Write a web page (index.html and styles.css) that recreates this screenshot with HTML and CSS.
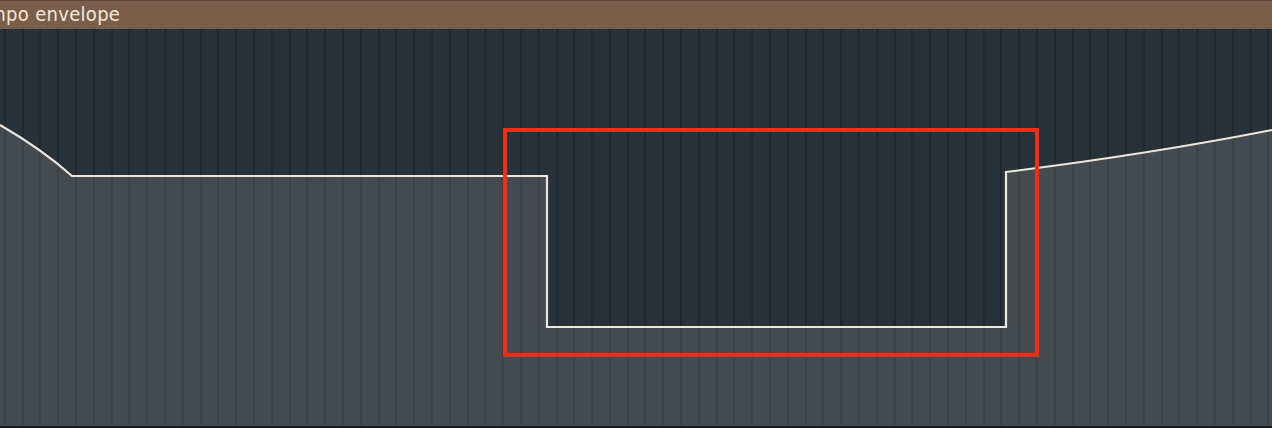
FILE: index.html
```html
<!DOCTYPE html>
<html lang="en">
<head>
    <meta charset="UTF-8">
    <title>Tempo envelope</title>
    <link rel="stylesheet" href="styles.css">
</head>
<body>

    <div class="clip">
        <div class="clip-title"><span class="clip-name">Tempo envelope</span></div>

        <div class="clip-body">
            <!-- one column per beat -->
            <div class="beats">
                <div class="beat"></div><div class="beat"></div><div class="beat"></div><div class="beat"></div>
                <div class="beat"></div><div class="beat"></div><div class="beat"></div><div class="beat"></div>
                <div class="beat"></div><div class="beat"></div><div class="beat"></div><div class="beat"></div>
                <div class="beat"></div><div class="beat"></div><div class="beat"></div><div class="beat"></div>
                <div class="beat"></div><div class="beat"></div><div class="beat"></div><div class="beat"></div>
                <div class="beat"></div><div class="beat"></div><div class="beat"></div><div class="beat"></div>
                <div class="beat"></div><div class="beat"></div><div class="beat"></div><div class="beat"></div>
                <div class="beat"></div><div class="beat"></div><div class="beat"></div><div class="beat"></div>
                <div class="beat"></div><div class="beat"></div><div class="beat"></div><div class="beat"></div>
                <div class="beat"></div><div class="beat"></div><div class="beat"></div><div class="beat"></div>
                <div class="beat"></div><div class="beat"></div><div class="beat"></div><div class="beat"></div>
                <div class="beat"></div><div class="beat"></div><div class="beat"></div><div class="beat"></div>
                <div class="beat"></div><div class="beat"></div><div class="beat"></div><div class="beat"></div>
                <div class="beat"></div><div class="beat"></div><div class="beat"></div><div class="beat"></div>
                <div class="beat"></div><div class="beat"></div><div class="beat"></div><div class="beat"></div>
                <div class="beat"></div><div class="beat"></div><div class="beat"></div><div class="beat"></div>
                <div class="beat"></div><div class="beat"></div><div class="beat"></div><div class="beat"></div>
                <div class="beat"></div><div class="beat"></div><div class="beat"></div><div class="beat"></div>
            </div>

            <svg class="envelope" viewBox="0 0 1272 397">
                <!-- area under the curve -->
                <path class="env-fill"
                      d="M0 96 Q43 121 72 147 L547 147 L547 298 L1006 298 L1006 143 Q1150 125 1272 101 L1272 397 L0 397 Z"/>
                <!-- the envelope line itself -->
                <path class="env-line"
                      d="M0 96 Q43 121 72 147 L547 147 L547 298 L1006 298 L1006 143 Q1150 125 1272 101"/>
            </svg>
            <div class="selection"></div>
        </div>
    </div>

</body>
</html>
```

FILE: styles.css
```css
body {
    margin: 0;
    background: #1b2126;
    overflow: hidden;
}
.clip {
    width: 1272px;
    height: 428px;
    display: flex;
    flex-direction: column;
    overflow: hidden;
}
.clip-title {
    height: 28px;
    background: #7a5e4a;
    border-top: 1px solid #5a4536;
    overflow: hidden;
    white-space: nowrap;
}
.clip-name {
    display: inline-block;
    margin-left: -31px;
    font-family: "DejaVu Sans Condensed", "DejaVu Sans", sans-serif;
    font-size: 20px;
    line-height: 26px;
    letter-spacing: 0.3px;
    color: #f1e7dc;
}
.clip-body {
    position: relative;
    flex: 1;
    border-bottom: 2px solid #161b1f;
    background-color: #27313a;
    overflow: hidden;
}
.beats {
    display: flex;
    height: 100%;
    margin-left: -12px;
}
.beat {
    flex: 0 0 17.8px;
    border-right: 2px solid #1f272e;
    box-sizing: border-box;
}
.beat:nth-child(even) {
    background: rgba(255, 255, 255, 0.008);
}
.envelope {
    position: absolute;
    left: 0;
    top: 0;
    width: 1272px;
    height: 397px;
}
.env-fill {
    fill: rgba(205, 200, 190, 0.17);
}
.env-line {
    fill: none;
    stroke: #efe7db;
    stroke-width: 2.2;
}
.selection {
    position: absolute;
    left: 503px;
    top: 99px;
    width: 528px;
    height: 221px;
    border: 4px solid #f42c12;
}
```
